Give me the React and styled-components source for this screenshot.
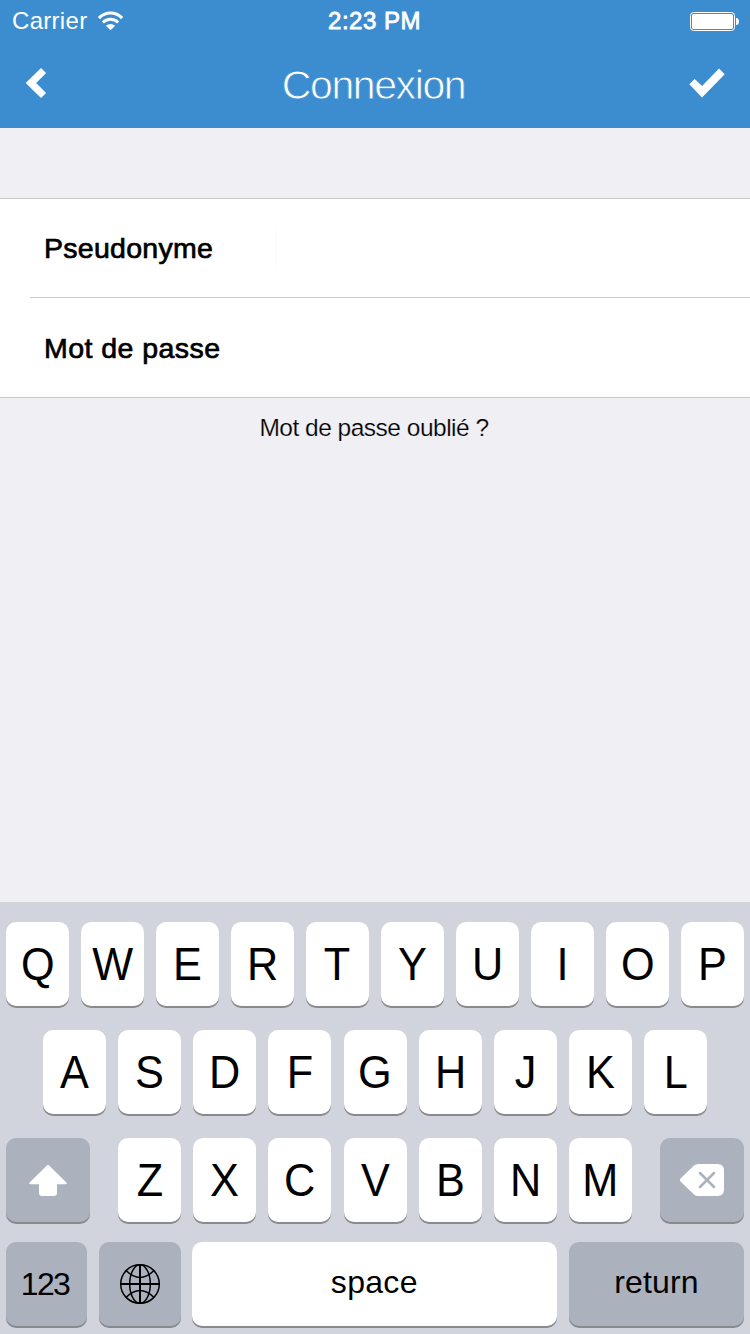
import React from 'react';
import styled, { createGlobalStyle } from 'styled-components';

const blue = '#3c8dd0';

const GlobalStyle = createGlobalStyle`
  * { box-sizing: border-box; }
  body {
    margin: 0;
    font-family: 'Liberation Sans', Arial, sans-serif;
    color: #000;
  }
`;

const Screen = styled.div`
  width: 750px;
  height: 1334px;
  display: flex;
  flex-direction: column;
  background: #efeff4;
  overflow: hidden;
`;

const Header = styled.header`
  height: 128px;
  background: ${blue};
  color: #fff;
`;

const StatusBar = styled.div`
  height: 40px;
  display: grid;
  grid-template-columns: 1fr auto 1fr;
  align-items: center;
  padding: 2px 11px 0 12px;
`;

const Carrier = styled.div`
  display: flex;
  align-items: center;
  gap: 10px;
  font-size: 24px;
  line-height: 28px;
  letter-spacing: 0.3px;
`;

const Clock = styled.div`
  margin-right: 2px;
  font-size: 24px;
  line-height: 28px;
  letter-spacing: 0.5px;
  -webkit-text-stroke: 0.8px #fff;
`;

const BatteryIcon = styled.svg`
  justify-self: end;
  display: block;
`;

const NavBar = styled.nav`
  height: 88px;
  display: grid;
  grid-template-columns: 1fr auto 1fr;
  align-items: center;
  padding: 0 25px;
`;

const NavButton = styled.button`
  justify-self: ${(p) => p.$side};
  padding: 0;
  margin-bottom: 2px;
  border: 0;
  background: none;
  color: inherit;
  svg { display: block; }
`;

const Title = styled.h1`
  margin: 1px 3px 0 0;
  font-size: 41px;
  line-height: 46px;
  font-weight: 400;
  letter-spacing: -1.4px;
  -webkit-text-stroke: 0.8px ${blue};
`;

const Form = styled.form`
  margin-top: 70px;
  height: 200px;
  padding-left: 30px;
  background: #fff;
  border-top: 1px solid #c8c7cc;
  border-bottom: 1px solid #c8c7cc;
`;

const Field = styled.label`
  display: flex;
  align-items: center;
  height: ${(p) => p.$height}px;
  padding-left: 14px;
  border-bottom: ${(p) => (p.$divided ? '1px solid #c8c7cc' : '0')};
`;

const FieldName = styled.span`
  width: 231px;
  font-size: 28.5px;
  line-height: 32px;
  letter-spacing: ${(p) => p.$spacing}px;
  -webkit-text-stroke: 0.7px #000;
`;

const Caret = styled.span`
  width: 2px;
  height: 36px;
  background: #fbfbff;
`;

const Forgot = styled.a`
  margin-top: 16px;
  padding-right: 2px;
  text-align: center;
  font-size: 24.5px;
  line-height: 28px;
  letter-spacing: -0.5px;
  -webkit-text-stroke: 0.2px #efeff4;
`;

const Keyboard = styled.div`
  margin-top: auto;
  height: 432px;
  padding: 20px 6px 0;
  background: #d1d4dc;
`;

const KeyRow = styled.div`
  display: flex;
  justify-content: space-between;
  height: 84px;
  padding: 0 ${(p) => p.$inset || 0}px;
  margin-bottom: ${(p) => p.$after || 0}px;
`;

const LetterGroup = styled.div`
  display: flex;
  justify-content: space-between;
  width: 514px;
  margin-left: 0.2px;
`;

const Key = styled.button`
  display: flex;
  align-items: center;
  justify-content: center;
  width: ${(p) => p.$width || 63}px;
  height: 84px;
  padding: 0 ${(p) => p.$shift || 0}px ${(p) => p.$lift || 0}px 0;
  border: 0;
  border-radius: 10px;
  background: ${(p) => (p.$dark ? '#abb1bd' : '#fff')};
  box-shadow: 0 2px 0 #888a8e;
  color: #000;
  font-family: inherit;
  font-size: ${(p) => p.$size || 46}px;
  line-height: 1;
  letter-spacing: ${(p) => p.$spacing || 0}px;
  svg { display: block; }
`;

const Letter = styled.span`
  transform: scaleX(0.94);
`;

const WifiIcon = () => (
  <svg width="26" height="20" viewBox="0 0 26 20" fill="none" stroke="#fff" aria-hidden="true">
    <path d="M1.9 7.1A15.8 15.8 0 0 1 25.1 7.1" strokeWidth="3.1" />
    <path d="M5.9 11.5A10.4 10.4 0 0 1 21.1 11.5" strokeWidth="3" />
    <path d="M13.5 19.2 8.8 14.7Q13.5 11.3 18.2 14.7Z" fill="#fff" stroke="none" />
  </svg>
);

const Battery = () => (
  <BatteryIcon width="49" height="19" viewBox="0 0 49 19" aria-hidden="true">
    <rect x=".5" y=".5" width="44" height="18" rx="3" fill="none" stroke="#fff" />
    <rect x="2" y="2" width="41" height="15" rx="1.5" fill="#fff" />
    <path d="M46 6h1q2 .8 2 3.5T47 13h-1z" fill="#fff" />
  </BatteryIcon>
);

const BackIcon = () => (
  <svg width="22" height="32" viewBox="0 0 22 32" fill="#fff" aria-hidden="true">
    <path d="M.7 16 16 .9 21.1 6 11.1 16 21.1 26 16 31.1Z" />
  </svg>
);

const CheckIcon = () => (
  <svg width="36" height="32" viewBox="0 0 36 32" fill="#fff" aria-hidden="true">
    <path d="M.3 17.3 5.7 11.9 13.1 19.1 30 1.5 35.7 7.2 13 30.6Z" />
  </svg>
);

const ShiftIcon = () => (
  <svg width="40" height="34" viewBox="0 -2 40 34" fill="#fff" aria-hidden="true">
    <path d="M18.9 .4Q20 -.7 21.1 .4L38.4 17.6Q39.5 19.2 37.6 19.2H29V28Q29 31 26 31H14Q11 31 11 28V19.2H2.4Q.5 19.2 1.6 17.6Z" />
  </svg>
);

const DeleteIcon = () => (
  <svg width="44" height="32" viewBox="0 0 44 32" aria-hidden="true">
    <path d="M.8 14.2 14 1.6Q15.8 0 18.2 0H37.5Q44 0 44 6.5V25.5Q44 32 37.5 32H18.2Q15.8 32 14 30.4L.8 17.8Q-.8 16 .8 14.2Z" fill="#fff" />
    <path d="m20 9 14 14m0-14L20 23" fill="none" stroke="#abb1bd" strokeWidth="2.5" strokeLinecap="round" />
  </svg>
);

const GlobeIcon = () => (
  <svg width="42" height="42" viewBox="0 0 42 42" fill="none" stroke="#000" strokeWidth="1.5" aria-hidden="true">
    <circle cx="21" cy="21" r="19.3" />
    <ellipse cx="21" cy="21" rx="10.3" ry="19.3" />
    <path d="M21 1.5v39M1.5 21h39" strokeWidth="2" />
    <path d="M7 7.5Q21 21.5 35 7.5M7 34.5Q21 20.5 35 34.5" />
  </svg>
);

const letters = (text) => text.split('').map((c) => (
  <Key type="button" key={c}><Letter>{c}</Letter></Key>
));

export default function App() {
  return (
    <Screen>
      <GlobalStyle />
      <Header>
        <StatusBar>
          <Carrier>Carrier<WifiIcon /></Carrier>
          <Clock>2:23 PM</Clock>
          <Battery />
        </StatusBar>
        <NavBar>
          <NavButton type="button" $side="start" aria-label="Retour"><BackIcon /></NavButton>
          <Title>Connexion</Title>
          <NavButton type="button" $side="end" aria-label="Valider"><CheckIcon /></NavButton>
        </NavBar>
      </Header>
      <Form>
        <Field $height={99} $divided>
          <FieldName $spacing={0.28}>Pseudonyme</FieldName>
          <Caret />
        </Field>
        <Field $height={100}>
          <FieldName $spacing={0.45}>Mot de passe</FieldName>
        </Field>
      </Form>
      <Forgot>Mot de passe oublié ?</Forgot>
      <Keyboard>
        <KeyRow $after={24}>{letters('QWERTYUIOP')}</KeyRow>
        <KeyRow $after={24} $inset={37}>{letters('ASDFGHJKL')}</KeyRow>
        <KeyRow $after={20}>
          <Key type="button" $dark $width={84} aria-label="Maj"><ShiftIcon /></Key>
          <LetterGroup>{letters('ZXCVBNM')}</LetterGroup>
          <Key type="button" $dark $width={84} aria-label="Effacer"><DeleteIcon /></Key>
        </KeyRow>
        <KeyRow>
          <Key type="button" $dark $width={81} $size={32} $spacing={-1.6} $shift={3}>123</Key>
          <Key type="button" $dark $width={82} aria-label="Clavier"><GlobeIcon /></Key>
          <Key type="button" $width={365} $size={32} $spacing={0.3} $lift={4} $shift={1}>space</Key>
          <Key type="button" $dark $width={175} $size={32} $spacing={0.1} $lift={4}>return</Key>
        </KeyRow>
      </Keyboard>
    </Screen>
  );
}
